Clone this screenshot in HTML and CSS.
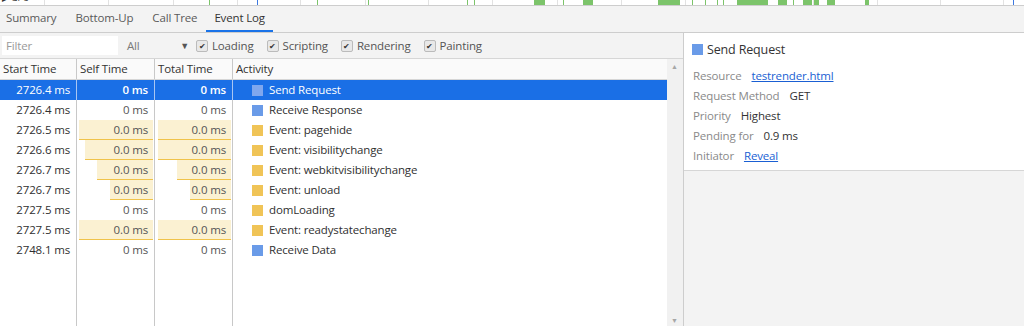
FILE: index.html
```html
<!DOCTYPE html>
<html lang="en">
<head>
  <meta charset="UTF-8">
  <title>Event Log</title>
  <link rel="stylesheet" href="styles.css">
</head>
<body>
  <div class="overview">
    <span class="track-label">&#9654; GPU</span>
    <div class="grid-lines" id="gridLines"></div>
  </div>

  <div class="tabs">
    <div class="tab">Summary</div>
    <div class="tab">Bottom-Up</div>
    <div class="tab">Call Tree</div>
    <div class="tab active">Event Log</div>
  </div>

  <div class="main">
    <div class="left">
      <div class="toolbar">
        <div class="filter-box">Filter</div>
        <div class="combo">All <span class="arrow">&#9660;</span></div>
        <label class="check"><span class="box">&#10004;</span>Loading</label>
        <label class="check"><span class="box">&#10004;</span>Scripting</label>
        <label class="check"><span class="box">&#10004;</span>Rendering</label>
        <label class="check"><span class="box">&#10004;</span>Painting</label>
      </div>
      <div class="table-wrap">
        <div class="table">
          <div class="row head">
            <div class="cell c-start">Start Time</div>
            <div class="cell c-self">Self Time</div>
            <div class="cell c-total">Total Time</div>
            <div class="cell c-act">Activity</div>
          </div>
          <div id="rows"></div>
          <div class="row filler">
            <div class="cell c-start"></div>
            <div class="cell c-self"></div>
            <div class="cell c-total"></div>
            <div class="cell c-act"></div>
          </div>
        </div>
        <div class="scrollbar">
          <span class="up">&#9650;</span>
          <span class="down">&#9660;</span>
        </div>
      </div>
    </div>

    <div class="right">
      <div class="details">
        <div class="details-title"><span class="swatch blue"></span>Send Request</div>
        <div class="prop"><span class="k">Resource</span><a class="link">testrender.html</a></div>
        <div class="prop"><span class="k">Request Method</span><span>GET</span></div>
        <div class="prop"><span class="k">Priority</span><span>Highest</span></div>
        <div class="prop"><span class="k">Pending for</span><span>0.9 ms</span></div>
        <div class="prop"><span class="k">Initiator</span><a class="link">Reveal</a></div>
      </div>
    </div>
  </div>

  <script>
    // [start, self, selfBar, total, totalBar, color, name]  bar = left inset in px, -1 = no bar
    const events = [
      ["2726.4 ms", "0 ms", -1, "0 ms", -1, "blue", "Send Request"],
      ["2726.4 ms", "0 ms", -1, "0 ms", -1, "blue", "Receive Response"],
      ["2726.5 ms", "0.0 ms", 2, "0.0 ms", 3, "yellow", "Event: pagehide"],
      ["2726.6 ms", "0.0 ms", 8, "0.0 ms", 3, "yellow", "Event: visibilitychange"],
      ["2726.7 ms", "0.0 ms", 20, "0.0 ms", 22, "yellow", "Event: webkitvisibilitychange"],
      ["2726.7 ms", "0.0 ms", 33, "0.0 ms", 35, "yellow", "Event: unload"],
      ["2727.5 ms", "0 ms", -1, "0 ms", -1, "yellow", "domLoading"],
      ["2727.5 ms", "0.0 ms", 2, "0.0 ms", 3, "yellow", "Event: readystatechange"],
      ["2748.1 ms", "0 ms", -1, "0 ms", -1, "blue", "Receive Data"]
    ];
    const rows = document.getElementById('rows');

    function bar(inset) {
      return inset < 0 ? '' : `<span class="bar" style="left:${inset}px"></span>`;
    }

    events.forEach((e, i) => {
      const row = document.createElement('div');
      row.className = 'row' + (i === 0 ? ' selected' : '');
      row.innerHTML = `
        <div class="cell c-start">${e[0]}</div>
        <div class="cell c-self">${bar(e[2])}<span class="val">${e[1]}</span></div>
        <div class="cell c-total">${bar(e[4])}<span class="val">${e[3]}</span></div>
        <div class="cell c-act"><span class="swatch ${e[5]}"></span>${e[6]}</div>
      `;
      rows.appendChild(row);
    });

    // overview grid + green activity blocks
    const grid = document.getElementById('gridLines');
    const lines = [44, 108, 173, 237, 300, 365, 428, 492, 557, 621, 685, 749, 813, 877, 940, 1003];
    lines.forEach(x => {
      const l = document.createElement('span');
      l.className = 'gline';
      l.style.left = x + 'px';
      grid.appendChild(l);
    });
    const blocks = [[209, 1], [317, 1], [368, 1], [467, 1], [474, 1], [534, 11], [563, 1], [583, 10],
      [658, 22], [692, 1], [705, 1], [717, 1], [723, 1], [737, 31], [778, 9], [793, 1], [803, 9],
      [814, 5], [827, 8], [865, 4]];
    blocks.forEach(b => {
      const g = document.createElement('span');
      g.className = 'gblock';
      g.style.left = b[0] + 'px';
      g.style.width = b[1] + 'px';
      grid.appendChild(g);
    });
    [257, 1013].forEach(x => {
      const m = document.createElement('span');
      m.className = 'gmark';
      m.style.left = x + 'px';
      grid.appendChild(m);
    });
  </script>
</body>
</html>
```

FILE: styles.css
```css
body {
  margin: 0;
  font-family: 'Segoe UI', 'Open Sans', sans-serif;
  font-size: 11.5px;
  letter-spacing: -0.15px;
  color: #303030;
  background-color: #f3f3f3;
  height: 326px;
  overflow: hidden;
  display: flex;
  flex-direction: column;
}

.overview {
  height: 5px;
  background-color: #fff;
  border-bottom: 1px solid #cdcdcd;
  position: relative;
  overflow: hidden;
}

.track-label {
  position: absolute;
  left: 2px;
  top: -7px;
  font-size: 9px;
  line-height: 10px;
  color: #333;
}

.grid-lines .gline,
.grid-lines .gblock,
.grid-lines .gmark {
  position: absolute;
  top: 0;
  height: 5px;
}

.gline {
  width: 1px;
  background-color: #e2e2e2;
}

.gblock {
  background-color: #7cc46a;
}

.gmark {
  width: 1px;
  background-color: #3c78e0;
}

.tabs {
  display: flex;
  height: 26px;
  border-bottom: 1px solid #cdcdcd;
  background-color: #f3f3f3;
}

.tab {
  padding: 0 9px 0 6px;
  margin-right: 4px;
  line-height: 24px;
  color: #5a5a5a;
  border-bottom: 2px solid transparent;
}

.tab:nth-child(3) {
  margin-right: 5px;
}

.tab.active {
  padding-left: 8px;
  padding-right: 8px;
  margin-left: -5px;
  color: #333;
  border-bottom-color: #1a73e8;
}

.main {
  flex: 1;
  display: flex;
  min-height: 0;
}

.left {
  width: 683px;
  display: flex;
  flex-direction: column;
  border-right: 1px solid #cdcdcd;
}

.toolbar {
  height: 25px;
  display: flex;
  align-items: center;
  border-bottom: 1px solid #d6d6d6;
  background-color: #f3f3f3;
}

.filter-box {
  width: 112px;
  height: 19px;
  margin-left: 2px;
  padding-left: 4px;
  line-height: 19px;
  background-color: #fff;
  color: #9a9a9a;
}

.combo {
  width: 62px;
  margin-left: 9px;
  color: #7a7a7a;
  display: flex;
  justify-content: space-between;
}

.combo .arrow {
  font-size: 9px;
  color: #555;
  line-height: 16px;
}

.check {
  display: flex;
  align-items: center;
  margin-left: 7px;
  margin-right: 6px;
  color: #555;
}

.check .box {
  width: 10px;
  height: 10px;
  margin-right: 4px;
  border: 1px solid #bbb;
  border-radius: 2px;
  background-color: #e8e8e8;
  color: #333;
  font-size: 8px;
  line-height: 10px;
  text-align: center;
}

.table-wrap {
  flex: 1;
  display: flex;
  background-color: #fff;
  min-height: 0;
}

.table {
  flex: 1;
  display: flex;
  flex-direction: column;
}

.row {
  display: flex;
  height: 20px;
  line-height: 20px;
}

.row.head {
  height: 20px;
  border-bottom: 1px solid #d6d6d6;
  background-color: #fafafa;
}

.row.head .cell {
  text-align: left;
  padding-left: 3px;
  color: #333;
}

.row.filler {
  flex: 1;
}

.cell {
  position: relative;
  box-sizing: border-box;
  border-right: 1px solid #c8c8c8;
  text-align: right;
  padding-right: 6px;
  white-space: nowrap;
}

.c-start {
  width: 77px;
  padding-left: 2px;
}

.c-self,
.c-total {
  width: 78px;
}

.c-act {
  flex: 1;
  text-align: left;
  border-right: none;
  padding-left: 19px;
  display: flex;
  align-items: center;
}

.row.head .c-act {
  display: block;
}

.row.selected {
  background-color: #1a6fe6;
  color: #fff;
}

.row.selected .cell {
  border-right-color: #a9c6f2;
}

.bar {
  position: absolute;
  top: 0;
  right: 1px;
  bottom: 0;
  background-color: #fbf1d2;
  border-bottom: 1px solid #f0c34a;
}

.val {
  position: relative;
  color: #555;
}

.row.selected .val {
  color: #fff;
  font-weight: 600;
}

.swatch {
  width: 11px;
  height: 11px;
  margin-right: 6px;
  flex-shrink: 0;
}

.swatch.blue {
  background-color: #6a9be8;
}

.swatch.yellow {
  background-color: #f0c457;
}

.row.selected .swatch.blue {
  background-color: #7fa7ee;
}

.scrollbar {
  width: 16px;
  background-color: #f1f1f1;
  position: relative;
  color: #a6a6a6;
  font-size: 7px;
}

.scrollbar .up,
.scrollbar .down {
  position: absolute;
  left: 4px;
}

.scrollbar .up {
  top: 3px;
}

.scrollbar .down {
  bottom: 1px;
}

.right {
  flex: 1;
  background-color: #f3f3f3;
}

.details {
  background-color: #fff;
  border-bottom: 1px solid #d6d6d6;
  padding: 5px 0 4px 9px;
}

.details-title {
  display: flex;
  align-items: center;
  font-size: 12.5px;
  color: #333;
  height: 22px;
  margin-left: -1px;
  margin-bottom: 6px;
}

.details-title .swatch {
  margin-right: 4px;
}

.prop {
  line-height: 20px;
  color: #333;
}

.prop .k {
  color: #8a8a8a;
  margin-right: 10px;
}

.link {
  color: #1a5fd3;
  text-decoration: underline;
}
```
